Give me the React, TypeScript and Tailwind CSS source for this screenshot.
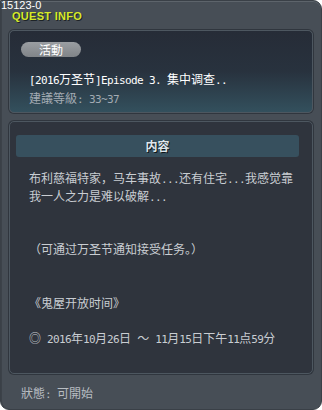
const cjk = { fontFamily: '"Noto Sans CJK SC", "Liberation Sans", sans-serif' };

// Latin runs are half-width (6px) in the game font; CJK runs are 12px.
function Txt({ text }: { text: string }) {
  const parts = text.match(/[\x20-\x7e]+|[^\x20-\x7e]+/g) ?? [];
  return (
    <>
      {parts.map((p, i) =>
        /^[\x20-\x7e]+$/.test(p) ? (
          <span key={i} className="whitespace-pre text-[11px] tracking-[-0.62px] font-['DejaVu_Sans_Mono',monospace]">
            {p}
          </span>
        ) : (
          <span key={i}>{p}</span>
        )
      )}
    </>
  );
}

const body = [
  "布利慈福特家，马车事故...还有住宅...我感觉靠",
  "我一人之力是难以破解...",
  "",
  "",
  "（可通过万圣节通知接受任务。）",
  "",
  "",
  "《鬼屋开放时间》",
  "",
  "◎ 2016年10月26日 ～ 11月15日下午11点59分",
];

export default function App() {
  return (
    <div className="h-[410px] w-[322px] bg-white" style={cjk}>
      <div className="flex h-full w-full flex-col rounded-b-[9px] rounded-tr-[9px] border border-[#3a4047] bg-[#474e56] shadow-[inset_0_1px_0_#5d646b,inset_1px_0_0_#3c4249]">
        <div className="flex h-[29px] flex-col font-['Liberation_Sans',sans-serif]">
          <span className="-mt-[1px] text-[11px] leading-[11px] text-white">15123-0</span>
          <span className="ml-[11px] text-[11px] font-bold leading-[11px] tracking-[0.3px] text-[#d6ea2a] [text-shadow:1px_1px_0_#1d2328]">
            QUEST INFO
          </span>
        </div>

        <div className="mx-[8px] h-[83px] rounded-[5px] border border-[#4d5760] bg-[linear-gradient(180deg,#262c37_0%,#28323e_50%,#33505d_100%)] px-[11px] pt-[11px] shadow-[0_0_0_1px_#30363e]">
          <div className="flex h-[15px] w-[60px] items-center justify-center rounded-full bg-[linear-gradient(180deg,#9a9ea2,#808488)] text-[12px] leading-none text-white">
            活動
          </div>
          <div className="ml-[8px] mt-[13px] text-[12px] leading-[17px] text-white">
            <Txt text="[2016万圣节]Episode 3. 集中调查.." />
          </div>
          <div className="ml-[8px] text-[12px] leading-[17px] text-[#a3abb3]">
            <Txt text="建議等級: 33~37" />
          </div>
        </div>

        <div className="mx-[8px] mt-[8px] h-[253px] rounded-[5px] border border-[#4d5760] bg-[#2f343d] pl-[6px] pr-[13px] pt-[13px] shadow-[0_0_0_1px_#30363e]">
          <div className="flex h-[22px] items-center justify-center rounded-[3px] bg-[#37505e] text-[12px] font-bold text-[#dfe6ec] [text-shadow:1px_1px_0_#101418]">
            内容
          </div>
          <div className="ml-[13px] mt-[12px] flex flex-col text-[12px] text-[#c9cdd2]">
            {body.map((line, i) => (
              <div key={i} className="h-[17.8px] whitespace-pre leading-[17.8px]">
                <Txt text={line} />
              </div>
            ))}
          </div>
        </div>

        <div className="ml-[20px] mt-[10px] text-[12px] leading-[17px] text-[#b8bdc2]">
          <Txt text="狀態: 可開始" />
        </div>
      </div>
    </div>
  );
}
